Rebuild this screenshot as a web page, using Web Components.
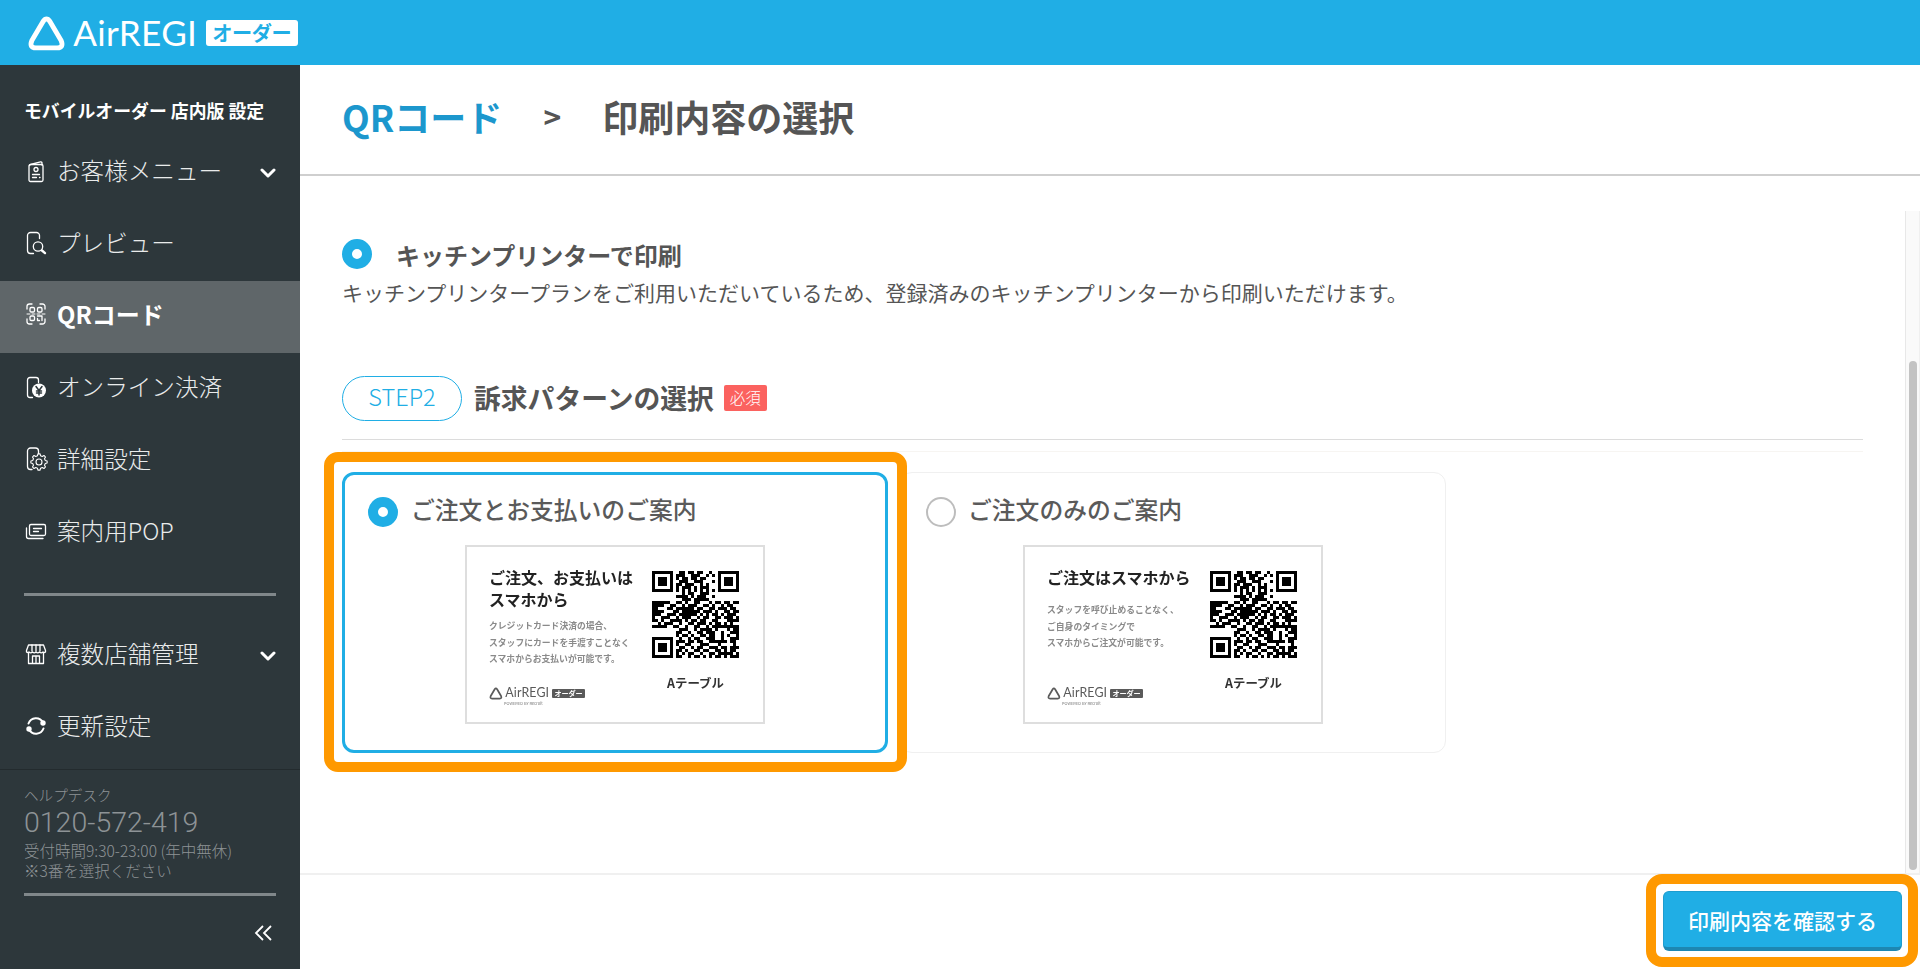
<!DOCTYPE html>
<html lang="ja">
<head>
<meta charset="utf-8">
<title>QRコード 印刷内容の選択</title>
<style>
  html, body { margin: 0; height: 100%; overflow: hidden; background: #fff; }
  body { font-family: "Noto Sans CJK JP", "Noto Sans", sans-serif; color: #555; }
</style>
</head>
<body>
<order-app></order-app>
<script>
// gear outline for the settings icon
function gearPath(cx, cy, outer, inner, teeth) {
  let d = "";
  const step = Math.PI * 2 / teeth;
  for (let i = 0; i < teeth; i++) {
    const a = i * step;
    const pts = [[inner, a - step * .32], [outer, a - step * .17], [outer, a + step * .17], [inner, a + step * .32]];
    pts.forEach(([r, t], n) => {
      d += `${i === 0 && n === 0 ? "M" : "L"}${(cx + r * Math.cos(t)).toFixed(2)} ${(cy + r * Math.sin(t)).toFixed(2)}`;
    });
  }
  return d + "Z";
}

const ICONS = {
  menu: `<path d="M5.5 6.5a1 1 0 0 1 1-1l10-2.6c.8-.2 1.500.4 1.500 1.100V6"/><rect x="5" y="5.500" width="14" height="17" rx="1.500"/><circle cx="12" cy="10.500" r="2"/><path d="M8.500 15.500h7M8.500 18.500h4M15.500 18.500h.5"/>`,
  preview: `<path d="M9.500 22.500H6.500a3 3 0 0 1-3-3v-15a3 3 0 0 1 3-3h6a3 3 0 0 1 3 3v3"/><circle cx="14" cy="15.500" r="4.700"/><path stroke-width="2.400" d="M18 19.500l3 2.600"/>`,
  qr: `<path d="M3 7V4.500A2.500 2.500 0 0 1 5.500 2H8M16 2h2.500A2.500 2.500 0 0 1 21 4.500V7M21 17v2.500a2.500 2.500 0 0 1-2.500 2.500H16M8 22H5.500A2.500 2.500 0 0 1 3 19.500V17"/><rect x="6" y="5.500" width="4.500" height="4.500" rx="1.200"/><rect x="13.500" y="5.500" width="4.500" height="4.500" rx="1.200"/><rect x="6" y="14" width="4.500" height="4.500" rx="1.200"/><path d="M13.500 14h4.500v4.500M13.500 16.500v2h2"/><path d="M3 12h18" stroke-width="1" stroke-dasharray="3 2"/>`,
  online: `<path d="M8.500 22.500H6a2.500 2.500 0 0 1-2.500-2.500V5A2.500 2.500 0 0 1 6 2.500h6A2.500 2.500 0 0 1 14.500 5v2.500"/><circle cx="15" cy="15.500" r="7" fill="#fff" stroke="none"/><path stroke="#2d373b" stroke-width="1.500" d="M12 11.500l3 4 3-4M15 15.500v4.500M12.500 16h5M12.500 18h5"/>`,
  detail: `<path d="M8 22.500H6.500a3 3 0 0 1-3-3V4a3 3 0 0 1 3-3h5a3 3 0 0 1 3 3v2.500"/><path stroke-width="1.100" d="${gearPath(15, 15, 8.200, 6.400, 8)}"/><circle cx="15" cy="15" r="3" stroke-width="1.100"/>`,
  pop: `<path d="M7 5.500h13a1.500 1.500 0 0 1 1.500 1.500v8a1.500 1.500 0 0 1-1.500 1.500H7A1.500 1.500 0 0 1 5.500 15V7A1.500 1.500 0 0 1 7 5.500z"/><path d="M2.500 9v8.500a2 2 0 0 0 2 2H19"/><path d="M9.500 9.500h8M9.500 12.500h5"/>`,
  store: `<path d="M4.500 3h15l2 5.500v1.500a2 2 0 0 1-2.500 0 2.500 2.500 0 0 1-3.500 0 2.500 2.500 0 0 1-3.500 0 2.500 2.500 0 0 1-3.500 0 2.500 2.500 0 0 1-3.500 0 2 2 0 0 1-2.500 0V8.500z"/><path d="M8 3v6M12 3v6M16 3v6M4.500 11v10.500h15V11M8.500 21v-7h7v7M12 14v7"/>`,
  refresh: `<path stroke-width="2" d="M4.500 9.500A8 8 0 0 1 19 8.500M19.500 14.500A8 8 0 0 1 5 15.500"/><circle cx="19" cy="9" r="2.700" fill="#fff" stroke="none"/><circle cx="5" cy="15" r="2.700" fill="#fff" stroke="none"/>`
};

class AirLogo extends HTMLElement {
  constructor() {
    super();
    this.shadowDOM = this.attachShadow({ mode: "open" });
    this.shadowDOM.innerHTML = `
    <style>
      :host { display: inline-flex; align-items: center; color: var(--logo-color, #fff); line-height: 1; }
      svg { width: 1.2em; height: 1.12em; margin-right: .22em; flex: none; }
      .name { font-family: Lato, "Liberation Sans", sans-serif; font-size: 1.08em; font-weight: 400; letter-spacing: .01em; }
      .tag {
        margin-left: .26em; width: 2.83em; height: .8em; border-radius: .09em;
        background: var(--logo-color, #fff); color: var(--logo-tag, #20aee5);
        display: flex; align-items: center; justify-content: center;
        font-size: 1em; font-weight: 700;
      }
      .tag span { font-size: .62em; letter-spacing: -.02em; line-height: 1; }
    </style>
    <svg viewBox="0 0 40 37" fill="none" stroke="currentColor" stroke-width="5" stroke-linejoin="round">
      <path d="M16.500 6.500 Q20 1.500 23.500 6.500 L35 26 Q38 33.500 31 33.500 H9 Q2 33.500 5 26 Z"/>
    </svg>
    <span class="name">AirREGI</span>
    <span class="tag"><span>オーダー</span></span>`;
  }
}

class NavItem extends HTMLElement {
  constructor() {
    super();
    this.shadowDOM = this.attachShadow({ mode: "open" });
  }
  connectedCallback() {
    const icon = ICONS[this.getAttribute("icon")];
    this.shadowDOM.innerHTML = `
    <style>
      :host { display: flex; align-items: center; height: 72px; padding: 0 24px 4px; box-sizing: border-box; color: #e9ebeb; font-size: 23.600px; font-weight: 300; line-height: 1; }
      :host([active]) { background: #5f6669; padding-bottom: 6px; color: #fff; font-weight: 700; font-size: 24px; }
      svg.ic { width: 24px; height: 24px; flex: none; margin-right: 9px; fill: none; stroke: #fff; stroke-width: 1.300; stroke-linecap: round; stroke-linejoin: round; }
      .grow { flex: 1; white-space: nowrap; }
      svg.cv { width: 16px; height: 10px; fill: none; stroke: #fff; stroke-width: 3; stroke-linecap: round; stroke-linejoin: round; margin-top: 3px; }
    </style>
    <svg class="ic" viewBox="0 0 24 24">${icon}</svg>
    <span class="grow"><slot></slot></span>
    ${this.hasAttribute("more") ? `<svg class="cv" viewBox="0 0 16 10"><path d="M2 2l6 6 6-6"/></svg>` : ""}`;
  }
}

class SideNav extends HTMLElement {
  constructor() {
    super();
    this.shadowDOM = this.attachShadow({ mode: "open" });
    this.shadowDOM.innerHTML = `
    <style>
      :host { display: flex; flex-direction: column; width: 300px; flex: none; background: #2d373b; }
      h2 { margin: 0; height: 72px; padding: 35px 0 0 24px; box-sizing: border-box; color: #fff; font-size: 17.850px; font-weight: 700; line-height: 20px; white-space: nowrap; }
      hr { border: 0; height: 3px; background: #80878a; margin: 24px 24px; }
      .help { margin-top: 5px; border-top: 1px solid #232b2e; padding: 13.500px 24px 0; color: #8d9396; font-weight: 300; }
      .t1 { font-size: 14.600px; line-height: 22px; }
      .tel { font-family: Roboto, "Noto Sans", sans-serif; font-size: 28.500px; line-height: 34px; }
      .t2 { font-size: 15.500px; line-height: 20px; white-space: nowrap; }
      .help hr { margin: 13px 0 0; }
      .fold { display: flex; justify-content: flex-end; padding: 29px 28px 0 0; }
      .fold svg { width: 18px; height: 16px; fill: none; stroke: #fff; stroke-width: 1.800; }
    </style>
    <h2>モバイルオーダー 店内版 設定</h2>
    <nav-item icon="menu" more>お客様メニュー</nav-item>
    <nav-item icon="preview">プレビュー</nav-item>
    <nav-item icon="qr" active>QRコード</nav-item>
    <nav-item icon="online">オンライン決済</nav-item>
    <nav-item icon="detail">詳細設定</nav-item>
    <nav-item icon="pop">案内用POP</nav-item>
    <hr>
    <nav-item icon="store" more>複数店舗管理</nav-item>
    <nav-item icon="refresh">更新設定</nav-item>
    <div class="help">
      <div class="t1">ヘルプデスク</div>
      <div class="tel">0120-572-419</div>
      <div class="t2">受付時間9:30-23:00 (年中無休)</div>
      <div class="t2">※3番を選択ください</div>
      <hr>
    </div>
    <div class="fold"><svg viewBox="0 0 18 16"><path d="M9 1L2 8l7 7M17 1l-7 7 7 7"/></svg></div>`;
  }
}

class RadioMark extends HTMLElement {
  constructor() {
    super();
    this.shadowDOM = this.attachShadow({ mode: "open" });
    this.shadowDOM.innerHTML = `
    <style>
      :host { display: block; width: 30px; height: 30px; border-radius: 50%; box-sizing: border-box; flex: none; background: #fff; border: 2px solid #bdbdbd; }
      :host([checked]) { background: #fff; border: 10px solid #20aee5; }
    </style>`;
  }
}

class QrMark extends HTMLElement {
  constructor() {
    super();
    this.shadowDOM = this.attachShadow({ mode: "open" });
    const rows = [
      "00000000011011011001000000000",
      "00000000111001110010100000000",
      "00000000101101101100000000000",
      "00000000011100111000100000000",
      "00000000110111001010000000000",
      "00000000101110101110000000000",
      "00000000101010101010100000000",
      "00000000001011001110000000000",
      "00000000111101011100100000000",
      "00000000001110111110000000000",
      "11111100110100110001011011011",
      "11110011001011100110100101100",
      "11000110111111011001101110110",
      "11110001101111110111010011011",
      "11100111011111101010110101110",
      "10011100101110010110011011101",
      "11010011110101101100110001111",
      "00101110010011011101011010100",
      "11111001100100110010111111111",
      "00000000011100101111010001011",
      "00000000110010011011100100111",
      "00000000101101001101100101001",
      "00000000010010110011100100111",
      "00000000111011011001111110110",
      "00000000100110001110001000010",
      "00000000011001011001110110111",
      "00000000110100110110011010110",
      "00000000101011001001101111101",
      "00000000110010110101011010111"
    ];
    let d = "";
    rows.forEach((row, y) => {
      [...row].forEach((c, x) => {
        if (c === "1") d += `M${x} ${y}h1v1h-1z`;
      });
    });
    const finder = (x, y) => `<path d="M${x} ${y}h7v7h-7zM${x + 1} ${y + 1}v5h5v-5z" fill-rule="evenodd"/><rect x="${x + 2}" y="${y + 2}" width="3" height="3"/>`;
    this.shadowDOM.innerHTML = `
    <style>
      :host { display: block; width: 87px; height: 87px; }
      svg { display: block; width: 100%; height: 100%; }
    </style>
    <svg viewBox="0 0 29 29" shape-rendering="crispEdges" fill="#000">
      <path d="${d}"/>
      ${finder(0, 0)}${finder(22, 0)}${finder(0, 22)}
    </svg>`;
  }
}

class PopPreview extends HTMLElement {
  constructor() {
    super();
    this.shadowDOM = this.attachShadow({ mode: "open" });
    this.shadowDOM.innerHTML = `
    <style>
      :host { display: flex; width: 300px; height: 179px; box-sizing: border-box; border: 2px solid #dedede; background: #fff; padding: 24px 22px 16px 22px; --logo-color: #5a5a5a; --logo-tag: #fff; filter: blur(.35px); }
      .left { display: flex; flex-direction: column; width: 163px; flex: none; }
      .ttl { font-size: 16px; line-height: 22px; font-weight: 700; color: #222; white-space: nowrap; margin-top: -5px; }
      .sub { font-size: 8.800px; line-height: 16.500px; font-weight: 700; color: #8a8a8a; white-space: nowrap; padding-top: 2px; }
      .ft { margin-top: auto; }
      air-logo { font-size: 11.500px; display: flex; }
      .by { font-size: 4px; line-height: 5px; color: #777; padding-left: 15px; white-space: nowrap; margin-top: 1px; }
      .right { width: 87px; }
      .tbl { font-size: 12.400px; font-weight: 700; color: #333; text-align: center; line-height: 16px; margin-top: 17px; }
    </style>
    <div class="left">
      <div class="ttl"><slot name="title"></slot></div>
      <div class="sub"><slot name="text"></slot></div>
      <div class="ft"><air-logo></air-logo><div class="by">POWERED BY Recruit</div></div>
    </div>
    <div class="right">
      <qr-mark></qr-mark>
      <div class="tbl">Aテーブル</div>
    </div>`;
  }
}

class ChoiceCard extends HTMLElement {
  constructor() {
    super();
    this.shadowDOM = this.attachShadow({ mode: "open" });
  }
  connectedCallback() {
    const on = this.hasAttribute("checked");
    this.shadowDOM.innerHTML = `
    <style>
      :host { display: flex; flex-direction: column; align-items: center; width: 546px; height: 281px; box-sizing: border-box; border: 1px solid #f0f0f0; border-radius: 12px; background: #fff; padding: 24px 0 0; }
      :host([checked]) { border: 3px solid #20aee5; padding-top: 22px; }
      .top { align-self: stretch; display: flex; align-items: center; height: 30px; padding-left: ${on ? 23 : 25}px; gap: ${on ? 13 : 12}px; font-size: 23.800px; font-weight: 500; color: #5a5a5a; line-height: 30px; margin-bottom: 18px; white-space: nowrap; }
      ::slotted([slot="label"]) { margin-bottom: 6px; }
    </style>
    <div class="top"><radio-mark ${on ? "checked" : ""}></radio-mark><slot name="label"></slot></div>
    <slot></slot>`;
  }
}

// orange attention frame laid over whatever it wraps
class AttentionBox extends HTMLElement {
  constructor() {
    super();
    this.shadowDOM = this.attachShadow({ mode: "open" });
    this.shadowDOM.innerHTML = `
    <style>
      :host { display: block; position: relative; z-index: 2; }
      .frame { position: absolute; inset: var(--frame-inset, -20px); border: 10px solid #ff9900; border-radius: var(--frame-radius, 14px); pointer-events: none; }
      .mat { position: absolute; inset: var(--frame-inset, -20px); background: #fff; border-radius: var(--frame-radius, 14px); z-index: -1; }
    </style>
    <div class="mat"></div>
    <slot></slot>
    <div class="frame"></div>`;
  }
}

class StepHeading extends HTMLElement {
  constructor() {
    super();
    this.shadowDOM = this.attachShadow({ mode: "open" });
    this.shadowDOM.innerHTML = `
    <style>
      :host { display: flex; align-items: center; height: 64px; padding-bottom: 19px; box-sizing: border-box; border-bottom: 1px solid #dcdcdc; }
      .pill { width: 120px; height: 45px; box-sizing: border-box; border: 1px solid #20aee5; border-radius: 23px; color: #20aee5; font-size: 23.500px; font-weight: 300; display: flex; align-items: center; justify-content: center; line-height: 1; padding-bottom: 2px; }
      h3 { margin: 0 10px 0 12px; font-size: 26.800px; font-weight: 700; color: #555; line-height: 1; white-space: nowrap; }
      .req { width: 43px; height: 26px; border-radius: 2px; background: #fb625f; color: #fff; font-size: 15.500px; font-weight: 300; display: flex; align-items: center; justify-content: center; line-height: 1; }
    </style>
    <span class="pill">STEP2</span>
    <h3><slot></slot></h3>
    <span class="req">必須</span>`;
  }
}

class ScrollTrack extends HTMLElement {
  constructor() {
    super();
    this.shadowDOM = this.attachShadow({ mode: "open" });
    this.shadowDOM.innerHTML = `
    <style>
      :host { display: block; width: 15px; flex: none; box-sizing: border-box; margin-top: 35px; background: #fafafa; border-left: 1px solid #e8e8e8; border-right: 1px solid #f0f0f0; padding: 150px 2px 3px 3px; }
      div { height: 100%; background: #c3c3c3; border-radius: 4px; }
    </style>
    <div></div>`;
  }
}

class OrderApp extends HTMLElement {
  constructor() {
    super();
    this.shadowDOM = this.attachShadow({ mode: "open" });
    this.shadowDOM.innerHTML = `
    <style>
      :host { display: flex; flex-direction: column; height: 969px; overflow: hidden; }
      header { height: 65px; flex: none; background: #20aee5; display: flex; align-items: center; padding: 1px 0 0 27px; box-sizing: border-box; }
      header air-logo { font-size: 32.500px; }
      .below { flex: 1; display: flex; min-height: 0; }
      main { flex: 1; display: flex; flex-direction: column; min-width: 0; }
      .crumb { height: 111px; flex: none; box-sizing: border-box; border-bottom: 2px solid #cfcfcf; padding: 0 0 7px 42px; display: flex; align-items: center; font-size: 36px; font-weight: 700; line-height: 1; color: #555; white-space: nowrap; }
      .crumb a { color: #1c97cd; }
      .crumb i { font-style: normal; font-size: 30px; font-weight: 700; width: 100px; text-align: center; }
      .middle { flex: 1; display: flex; min-height: 0; }
      .content { flex: 1; min-width: 0; padding: 63px 42px 0; }
      .print { display: flex; align-items: center; height: 30px; gap: 24px; font-size: 24px; font-weight: 700; line-height: 30px; white-space: nowrap; }
      .print span { padding-top: 2px; }
      .desc { font-size: 21px; line-height: 28px; margin-top: 9px; white-space: nowrap; font-weight: 400; }
      step-heading { margin-top: 70px; }
      .faint { height: 1px; background: #f7f5f2; margin: 11px 0 20px; }
      .cards { display: flex; gap: 12px; }
      attention-box.card { --frame-inset: -20px -19px -19px -18px; }
      attention-box.cta { --frame-inset: -17px -16px -16px -17px; --frame-radius: 16px; }
      footer { height: 96px; flex: none; box-sizing: border-box; border-top: 2px solid #f0f0f0; display: flex; justify-content: flex-end; align-items: flex-start; padding: 16px 18px 0 0; }
      .btn { width: 239px; height: 60px; box-sizing: border-box; background: #20aee5; border: 1px solid #1e9dcf; border-bottom: 4px solid #1d87b2; border-radius: 6px; color: #fff; font-size: 21px; font-weight: 500; display: flex; align-items: center; justify-content: center; line-height: 1; padding-top: 2px; white-space: nowrap; }
    </style>
    <header><air-logo></air-logo></header>
    <div class="below">
      <side-nav></side-nav>
      <main>
        <div class="crumb"><a>QRコード</a><i>&gt;</i><span>印刷内容の選択</span></div>
        <div class="middle">
          <div class="content">
            <div class="print"><radio-mark checked></radio-mark><span>キッチンプリンターで印刷</span></div>
            <div class="desc">キッチンプリンタープランをご利用いただいているため、登録済みのキッチンプリンターから印刷いただけます。</div>
            <step-heading>訴求パターンの選択</step-heading>
            <div class="faint"></div>
            <div class="cards">
              <attention-box class="card">
                <choice-card checked>
                  <span slot="label">ご注文とお支払いのご案内</span>
                  <pop-preview>
                    <span slot="title">ご注文、お支払いは<br>スマホから</span>
                    <span slot="text" style="display:block;margin-top:6px">クレジットカード決済の場合、<br>スタッフにカードを手渡すことなく<br>スマホからお支払いが可能です。</span>
                  </pop-preview>
                </choice-card>
              </attention-box>
              <choice-card>
                <span slot="label">ご注文のみのご案内</span>
                <pop-preview>
                  <span slot="title">ご注文はスマホから</span>
                  <span slot="text" style="display:block;margin-top:12px">スタッフを呼び止めることなく、<br>ご自身のタイミングで<br>スマホからご注文が可能です。</span>
                </pop-preview>
              </choice-card>
            </div>
          </div>
          <scroll-track></scroll-track>
        </div>
        <footer>
          <attention-box class="cta"><div class="btn">印刷内容を確認する</div></attention-box>
        </footer>
      </main>
    </div>`;
  }
}

customElements.define("air-logo", AirLogo);
customElements.define("nav-item", NavItem);
customElements.define("side-nav", SideNav);
customElements.define("radio-mark", RadioMark);
customElements.define("qr-mark", QrMark);
customElements.define("pop-preview", PopPreview);
customElements.define("choice-card", ChoiceCard);
customElements.define("attention-box", AttentionBox);
customElements.define("step-heading", StepHeading);
customElements.define("scroll-track", ScrollTrack);
customElements.define("order-app", OrderApp);
</script>
</body>
</html>
